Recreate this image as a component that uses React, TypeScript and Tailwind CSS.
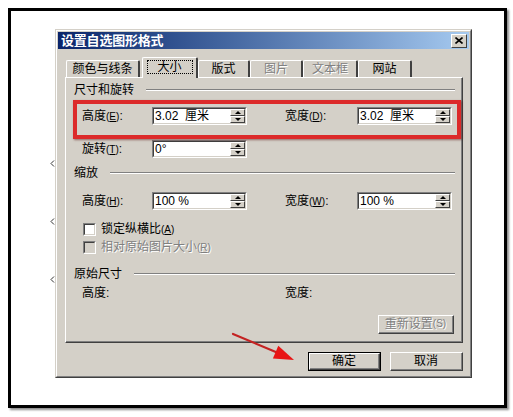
import React from "react";

const F = "font-['Liberation_Sans','Noto_Sans_CJK_SC',sans-serif]";

function Spin() {
  return (
    <div className="flex flex-col w-[15px] h-full">
      <div className="flex-1 flex items-center justify-center bg-[#d4d0c8] border border-t-white border-l-white border-r-[#404040] border-b-[#404040]">
        <div className="w-0 h-0 border-l-[3px] border-r-[3px] border-b-[3px] border-l-transparent border-r-transparent border-b-black" />
      </div>
      <div className="flex-1 flex items-center justify-center bg-[#d4d0c8] border border-t-white border-l-white border-r-[#404040] border-b-[#404040]">
        <div className="w-0 h-0 border-l-[3px] border-r-[3px] border-t-[3px] border-l-transparent border-r-transparent border-t-black" />
      </div>
    </div>
  );
}

function Input({ value }: { value: string }) {
  return (
    <div className="w-[95px] h-[18px] border border-t-[#808080] border-l-[#808080] border-b-white border-r-white">
      <div className="h-full flex items-stretch bg-white border border-t-[#404040] border-l-[#404040] border-b-[#d4d0c8] border-r-[#d4d0c8]">
        <div className="flex-1 pl-[1px] text-[12px] leading-[14px] text-black whitespace-pre">{value}</div>
        <Spin />
      </div>
    </div>
  );
}

function Label({ main, k, w }: { main: string; k: string; w: string }) {
  return (
    <div className={`${w} text-[12px] leading-[14px] text-black whitespace-nowrap`}>
      {main}
      <span className="text-[10px]">
        (<span className="underline">{k}</span>)
      </span>
      :
    </div>
  );
}

function Section({ title }: { title: string }) {
  return (
    <div className="flex items-center pl-[8px] pr-[7px] h-[14px]">
      <span className="text-[12px] leading-[14px] text-black whitespace-nowrap">{title}</span>
      <div className="flex-1 ml-[12px] h-[2px] border-t border-t-[#808080] border-b border-b-white" />
    </div>
  );
}

function Row({ l1, k1, v1, l2, k2, v2 }: { l1: string; k1: string; v1: string; l2?: string; k2?: string; v2?: string }) {
  return (
    <div className="flex items-center pl-[16px]">
      <Label main={l1} k={k1} w="w-[70px]" />
      <Input value={v1} />
      {l2 && (
        <>
          <div className="w-[38px]" />
          <Label main={l2} k={k2 || ""} w="w-[72px]" />
          <Input value={v2 || ""} />
        </>
      )}
    </div>
  );
}

function Checkbox({ label, k, disabled }: { label: string; k: string; disabled?: boolean }) {
  return (
    <div className="flex items-center pl-[17px] h-[13px]">
      <div className="w-[13px] h-[13px] border border-t-[#808080] border-l-[#808080] border-b-white border-r-white">
        <div className={`w-full h-full border border-t-[#404040] border-l-[#404040] border-b-[#d4d0c8] border-r-[#d4d0c8] ${disabled ? "bg-[#d4d0c8]" : "bg-white"}`} />
      </div>
      <span
        className={`ml-[5px] text-[12px] leading-[14px] whitespace-nowrap ${disabled ? "text-[#808080] [text-shadow:1px_1px_0_#ffffff]" : "text-black"}`}
      >
        {label}
        <span className="text-[10px]">
          (<span className="underline">{k}</span>)
        </span>
      </span>
    </div>
  );
}

function Tab({ label, w, disabled, selected }: { label: string; w: string; disabled?: boolean; selected?: boolean }) {
  if (selected) {
    return (
      <div className={`${w} h-[21px] -mb-[1px] relative z-10 bg-[#d4d0c8] border-l border-t border-l-white border-t-white border-r-2 border-r-[#404040] rounded-t-[2px] flex items-start justify-center pt-[2px]`}>
        <div className="w-[46px] h-[14px] border border-dotted border-black flex items-center justify-center text-[12px] leading-[12px] text-black">
          {label}
        </div>
      </div>
    );
  }
  return (
    <div className={`${w} h-[17px] bg-[#d4d0c8] border-l border-t border-l-white border-t-white border-r-2 border-r-[#404040] rounded-t-[2px] flex items-center justify-center text-[12px] leading-[14px] ${disabled ? "text-[#808080] [text-shadow:1px_1px_0_#ffffff]" : "text-black"}`}>
      {label}
    </div>
  );
}

function Button({ label, w, def, disabled, children }: { label: string; w: string; def?: boolean; disabled?: boolean; children?: React.ReactNode }) {
  const inner = (
    <div className="h-full border border-t-white border-l-white border-b-[#404040] border-r-[#404040]">
      <div
        className={`h-full flex items-center justify-center border-r border-b border-r-[#808080] border-b-[#808080] text-[12px] leading-[14px] ${disabled ? "text-[#808080] [text-shadow:1px_1px_0_#ffffff]" : "text-black"}`}
      >
        {label}
        {children}
      </div>
    </div>
  );
  if (def) {
    return <div className={`${w} h-[19px] border border-black`}>{inner}</div>;
  }
  return <div className={`${w} h-[19px]`}>{inner}</div>;
}

function Mark() {
  return (
    <svg width="5" height="7" viewBox="0 0 5 7" className="block">
      <path d="M4 0.5 L1 3.5 L4 6.5" fill="none" stroke="#333" strokeWidth="1" />
    </svg>
  );
}

export default function App() {
  return (
    <div className={`w-[513px] h-[417px] bg-white pt-[8px] pl-[8px] ${F}`}>
      <div className="w-[499px] h-[400px] border-[3px] border-black shadow-[2px_2px_2px_rgba(0,0,0,0.45)] bg-white flex">
        <div className="w-[44px] flex flex-col items-end pt-[149px]">
          <Mark />
          <div className="h-[51px]" />
          <Mark />
          <div className="h-[51px]" />
          <Mark />
        </div>
        <div className="mt-[18px] relative w-[417px] h-[349px] bg-[#d4d0c8] border border-t-[#d4d0c8] border-l-[#d4d0c8] border-b-[#404040] border-r-[#404040]">
          <div className="h-full border border-t-white border-l-white border-b-[#808080] border-r-[#808080] p-[1px] flex flex-col">
            {/* title bar */}
            <div className="h-[17px] flex items-center bg-gradient-to-r from-[#0a246a] to-[#a6caf0] pl-[3px] pr-[2px]">
              <span className="flex-1 text-white font-bold text-[13px] leading-[15px] tracking-[-0.2px]">设置自选图形格式</span>
              <div className="w-[16px] h-[14px] bg-[#d4d0c8] border border-t-white border-l-white border-b-[#404040] border-r-[#404040] flex items-center justify-center">
                <svg width="8" height="7" viewBox="0 0 8 7">
                  <path d="M0.5 0.5 L7.5 6.5 M7.5 0.5 L0.5 6.5" stroke="#000" strokeWidth="1.6" />
                </svg>
              </div>
            </div>
            {/* tabs */}
            <div className="mt-[8px] h-[20px] pl-[8px] flex items-end">
              <Tab label="颜色与线条" w="w-[74px]" />
              <div className="w-[2px]" />
              <Tab label="大小" w="w-[56px]" selected />
              <Tab label="版式" w="w-[52px]" />
              <Tab label="图片" w="w-[53px]" disabled />
              <Tab label="文本框" w="w-[55px]" disabled />
              <Tab label="网站" w="w-[54px]" />
            </div>
            {/* panel */}
            <div className="ml-[7px] w-[398px] h-[266px] relative border border-t-white border-l-white border-b-[#404040] border-r-[#404040] shadow-[inset_-1px_-1px_0_#808080] flex flex-col">
              <div className="h-[5px]" />
              <Section title="尺寸和旋转" />
              <div className="h-[10px]" />
              <Row l1="高度" k1="E" v1="3.02  厘米" l2="宽度" k2="D" v2="3.02  厘米" />
              <div className="h-[15px]" />
              <Row l1="旋转" k1="T" v1="0°" />
              <div className="h-[8px]" />
              <Section title="缩放" />
              <div className="h-[12px]" />
              <Row l1="高度" k1="H" v1="100 %" l2="宽度" k2="W" v2="100 %" />
              <div className="h-[13px]" />
              <Checkbox label="锁定纵横比" k="A" />
              <div className="h-[5px]" />
              <Checkbox label="相对原始图片大小" k="R" disabled />
              <div className="h-[13px]" />
              <Section title="原始尺寸" />
              <div className="h-[5px]" />
              <div className="flex items-center pl-[16px] h-[14px] text-[12px] leading-[14px] text-black">
                <span className="w-[203px]">高度:</span>
                <span>宽度:</span>
              </div>
              <div className="h-[15px]" />
              <div className="flex justify-end pr-[8px]">
                <Button label="重新设置" w="w-[76px]" disabled>
                  <span className="text-[10px]">(S)</span>
                </Button>
              </div>
              {/* red annotation box */}
              <div className="absolute left-[7px] top-[22px] w-[388px] h-[39px] border-[4px] border-[#dc2a2a] shadow-[1px_1px_2px_rgba(80,0,0,0.5)] pointer-events-none" />
            </div>
            {/* buttons */}
            <div className="mt-[9px] flex justify-end pr-[6px] gap-[9px]">
              <Button label="确定" w="w-[73px]" def />
              <Button label="取消" w="w-[73px]" />
            </div>
          </div>
          {/* red arrow */}
          <svg className="absolute left-0 top-0 pointer-events-none" width="417" height="349" viewBox="0 0 417 349">
            <line x1="177" y1="304" x2="221" y2="322.5" stroke="#c42222" strokeWidth="2.2" strokeLinecap="round" />
            <polygon points="238,330 216.9,328.6 222.3,315.8" fill="#e81414" />
          </svg>
        </div>
      </div>
    </div>
  );
}
